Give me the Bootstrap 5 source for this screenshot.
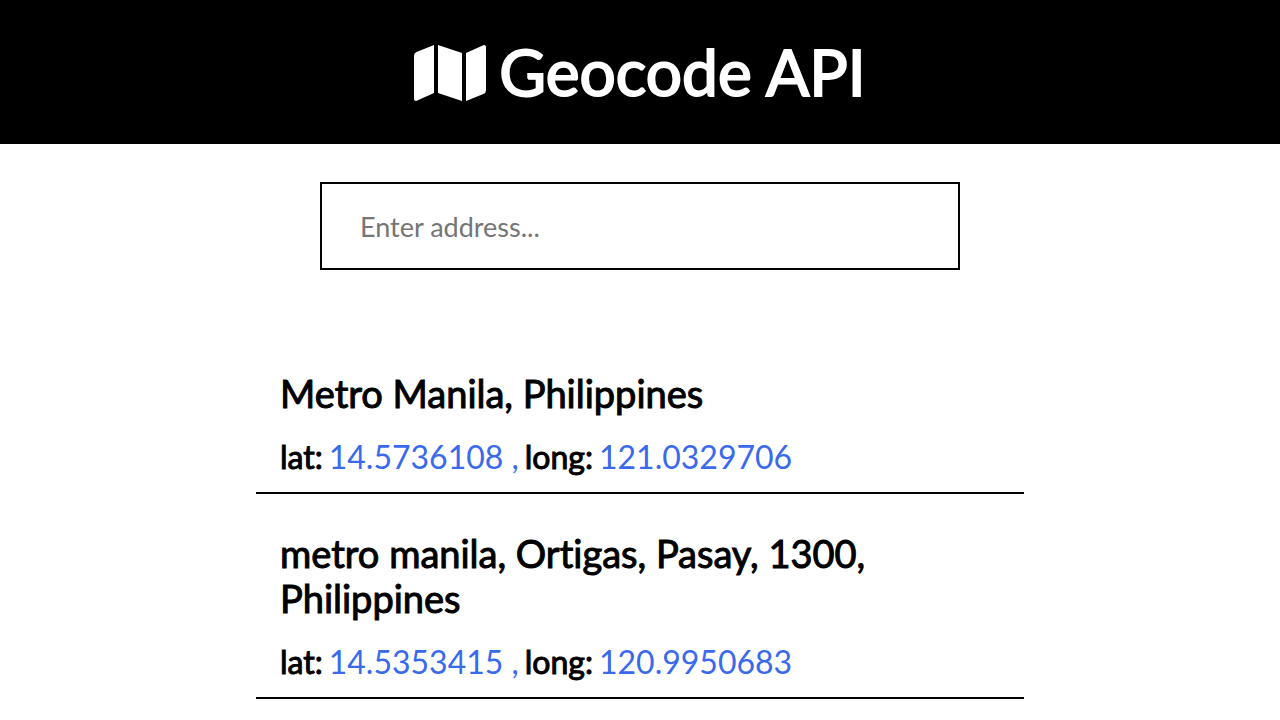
<!DOCTYPE html>
<html lang="en">
<head>
<meta charset="utf-8">
<meta name="viewport" content="width=device-width, initial-scale=1">
<title>Geocode API</title>
<link href="https://cdn.jsdelivr.net/npm/bootstrap@5.3.0/dist/css/bootstrap.min.css" rel="stylesheet">
<style>
body { font-family: Lato, sans-serif; font-variant-ligatures: none; color: #000; background: #fff; }
.site-header { background: #000; color: #fff; padding: 32px 0; }
.site-title { font-size: 64px; font-weight: 400; line-height: 80px; gap: 13px; -webkit-text-stroke: 2px; }
.map-icon { width: 72px; height: 64px; stroke: none; }
.search { padding-top: 38px; }
.address-input { height: 88px; padding: 0 38px; border: 2px solid #000; border-radius: 0; font-size: 27px; }
.address-input::placeholder { color: #757575; }
.results { width: 60%; }
.result { border-bottom: 2px solid #000; padding: 37px 24px 14px; }
.place { font-size: 38px; line-height: 45px; font-weight: 400; margin-bottom: 20px; -webkit-text-stroke: 1px; }
.coords { font-size: 32px; line-height: 42px; column-gap: 6px; }
.coord-name { -webkit-text-stroke: 1px; }
.coord-value { color: #396aeb; }
</style>
</head>
<body>
<header class="site-header">
<h1 class="site-title d-flex align-items-center justify-content-center m-0">
<svg class="map-icon" viewBox="0 -8 576 512" fill="currentColor" aria-hidden="true"><path d="M0 117.66v346.32c0 11.32 11.43 19.06 21.94 14.86L160 416V32L20.12 87.95A32.006 32.006 0 0 0 0 117.66zM192 416l192 64V96L192 32v384zM554.06 33.16L416 96v384l139.88-55.95A31.996 31.996 0 0 0 576 394.34V48.02c0-11.32-11.43-19.06-21.94-14.86z"/></svg>
<span>Geocode API</span>
</h1>
</header>
<main>
<form class="search w-50 mx-auto mb-5 pb-3">
<input id="address" type="text" class="form-control address-input" placeholder="Enter address..." aria-label="Address">
</form>
<section class="results mx-auto">
<article class="result">
<h2 class="place">Metro Manila, Philippines</h2>
<p class="coords d-flex flex-wrap m-0"><span class="coord-name">lat:</span> <span class="coord-value">14.5736108 ,</span> <span class="coord-name">long:</span> <span class="coord-value">121.0329706</span></p>
</article>
<article class="result">
<h2 class="place">metro manila, Ortigas, Pasay, 1300, Philippines</h2>
<p class="coords d-flex flex-wrap m-0"><span class="coord-name">lat:</span> <span class="coord-value">14.5353415 ,</span> <span class="coord-name">long:</span> <span class="coord-value">120.9950683</span></p>
</article>
</section>
</main>
<script src="https://cdn.jsdelivr.net/npm/bootstrap@5.3.0/dist/js/bootstrap.bundle.min.js"></script>
</body>
</html>
